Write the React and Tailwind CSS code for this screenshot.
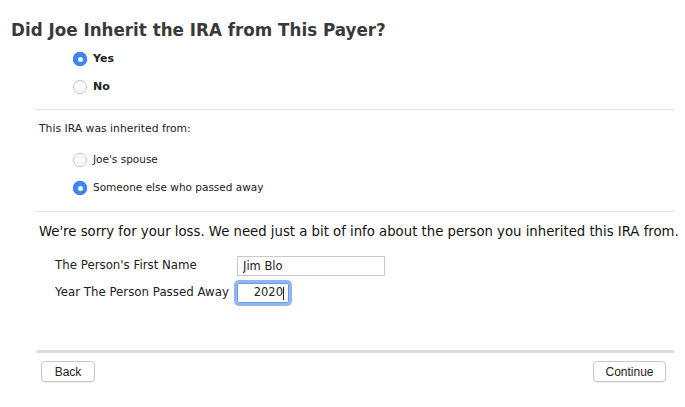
import { useState } from "react";

function Radio({ checked, label, bold, onClick }) {
  return (
    <div className="flex items-center h-[28px] cursor-default" onClick={onClick}>
      {checked ? (
        <span className="w-[14px] h-[14px] rounded-full bg-[#3b88f5] flex items-center justify-center shadow-[inset_0_0_0_0.5px_#2a6fd6]">
          <span className="w-[5px] h-[5px] rounded-full bg-white" />
        </span>
      ) : (
        <span className="w-[14px] h-[14px] rounded-full bg-white border border-[#c2c2c2]" />
      )}
      <span className={`ml-[6px] text-[#222] ${bold ? "text-[11px] font-bold" : "text-[10.5px]"}`}>{label}</span>
    </div>
  );
}

export default function App() {
  const [inherited, setInherited] = useState("yes");
  const [from, setFrom] = useState("else");
  const [name, setName] = useState("Jim Blo");
  const [year, setYear] = useState("2020");

  return (
    <div className="w-[685px] h-[407px] bg-white font-['DejaVu_Sans',sans-serif] overflow-hidden">
      <h1 className="pl-[11px] pt-[18px] h-[45px] leading-[24px] text-[16.75px] font-bold text-[#3a3a3a]">
        Did Joe Inherit the IRA from This Payer?
      </h1>

      <div className="ml-[36px] w-[638px]">
        {/* Did inherit */}
        <div className="pl-[37px] pb-[8px]">
          <Radio checked={inherited === "yes"} label="Yes" bold onClick={() => setInherited("yes")} />
          <Radio checked={inherited === "no"} label="No" bold onClick={() => setInherited("no")} />
        </div>
        <div className="h-px bg-[#e3e3e3]" />

        {/* Inherited from */}
        <p className="pl-[3px] mt-[9px] h-[20px] leading-[20px] text-[10.8px] text-[#222]">This IRA was inherited from:</p>
        <div className="pl-[37px] mt-[7px] pb-[9px]">
          <Radio checked={from === "spouse"} label="Joe's spouse" onClick={() => setFrom("spouse")} />
          <Radio checked={from === "else"} label="Someone else who passed away" onClick={() => setFrom("else")} />
        </div>
        <div className="h-px bg-[#e3e3e3]" />

        {/* Person info */}
        <p className="pl-[3px] mt-[10px] h-[20px] leading-[20px] text-[13.25px] text-[#111] whitespace-nowrap">
          We're sorry for your loss. We need just a bit of info about the person you inherited this IRA from.
        </p>
        <div className="pl-[19px] mt-[14px] flex flex-col gap-[7px] text-[11.8px] text-[#222]">
          <div className="flex items-center h-[20px]">
            <span className="w-[182px] whitespace-nowrap">The Person's First Name</span>
            <input
              value={name}
              onChange={(e) => setName(e.target.value)}
              className="w-[148px] h-[20px] border border-[#c9c9c9] px-[5px] text-[11.5px] text-[#222] outline-none"
            />
          </div>
          <div className="flex items-center h-[20px]">
            <span className="w-[182px] whitespace-nowrap">Year The Person Passed Away</span>
            <div className="w-[52px] h-[20px] rounded-[2px] shadow-[0_0_0_3px_#8fb6ee] border border-[#6d9be0] flex items-center justify-end pr-[4px]">
              <input
                value={year}
                onChange={(e) => setYear(e.target.value)}
                className="w-full text-right text-[11.5px] text-[#222] outline-none bg-transparent"
              />
              <span className="w-px h-[13px] bg-[#222]" />
            </div>
          </div>
        </div>

        <div className="mt-[47px] h-[3px] bg-[#dcdcdc] rounded-full" />

        <div className="mt-[8px] flex justify-between pl-[5px] pr-[8px]">
          <button className="w-[54px] h-[21px] rounded-[4px] border border-[#c8c8c8] bg-white text-[12px] text-[#222] font-['Liberation_Sans',sans-serif] shadow-[0_1px_1px_rgba(0,0,0,0.08)]">
            Back
          </button>
          <button className="w-[73px] h-[21px] rounded-[4px] border border-[#c8c8c8] bg-white text-[12px] text-[#222] font-['Liberation_Sans',sans-serif] shadow-[0_1px_1px_rgba(0,0,0,0.08)]">
            Continue
          </button>
        </div>
      </div>
    </div>
  );
}
